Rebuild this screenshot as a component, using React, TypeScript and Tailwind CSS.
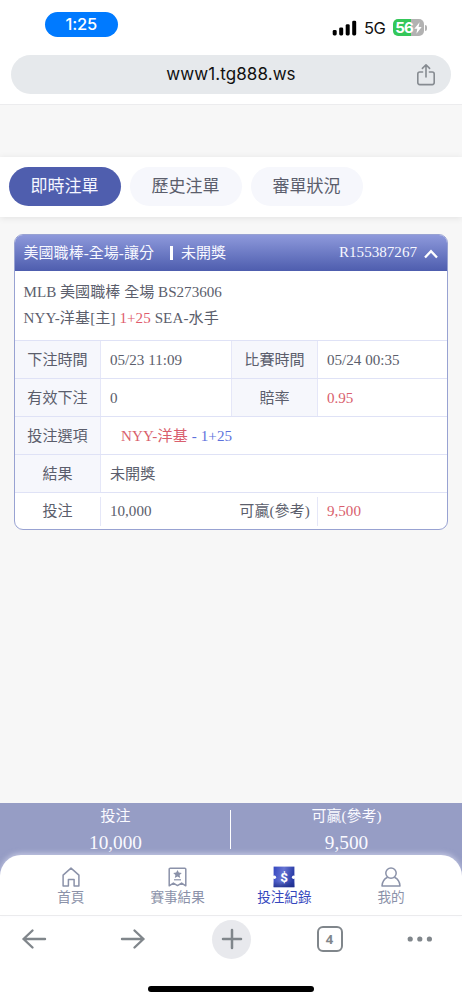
import type { ReactNode } from "react";

const tabs = ["即時注單", "歷史注單", "審單狀況"];

function StatusBar() {
  return (
    <div className="flex h-[55px] items-start justify-between pl-[44.5px] pr-[35px] font-['Inter','Liberation_Sans',sans-serif]">
      <div className="mt-[11.5px] flex h-[25px] w-[73.5px] items-center justify-center rounded-full bg-[#007aff] text-[16.5px] font-medium leading-none tracking-[-0.2px] text-white">
        1:25
      </div>
      <div className="mt-[18px] flex h-[20px] items-center">
        <svg width="25" height="16" viewBox="0 0 25 16" className="-mt-[1px] mr-[7px]">
          <rect x="0.7" y="10" width="4" height="5.4" rx="1.4" />
          <rect x="7.2" y="7.4" width="4" height="8" rx="1.4" />
          <rect x="13.7" y="4.2" width="4" height="11.2" rx="1.4" />
          <rect x="20.2" y="0.7" width="4" height="14.7" rx="1.4" />
        </svg>
        <span className="w-[29px] text-[16.5px] leading-none tracking-[-0.5px] text-[#111]">5G</span>
        <div className="-mt-[1px] flex h-[17px] w-[31px] items-center justify-center rounded-[5px] bg-[linear-gradient(90deg,#34c759_57%,#b2b2b2_57%)] text-white">
          <span className="text-[15px] font-bold leading-none tracking-[-0.8px]">56</span>
          <svg width="8" height="12" viewBox="0 0 8 12" fill="currentColor" className="ml-px">
            <path d="M5.6.2.3 6.8h3L2.4 11.8 7.7 4.9H4.6Z" />
          </svg>
        </div>
        <span className="-mt-[1px] ml-px h-[6px] w-[2px] rounded-r-full bg-[#b2b2b2]" />
      </div>
    </div>
  );
}

function AddressBar() {
  return (
    <div className="mx-[11px] flex h-[39px] items-center rounded-full bg-[#e6e9ec] font-['Inter','Liberation_Sans',sans-serif]">
      <span className="w-[25px]" />
      <span className="flex-1 pl-[10px] text-center text-[17px] leading-none tracking-[0.08px] text-[#111]">
        www1.tg888.ws
      </span>
      <svg
        width="20"
        height="24"
        viewBox="0 0 20 24"
        fill="none"
        stroke="#868b91"
        strokeWidth="1.6"
        strokeLinecap="round"
        strokeLinejoin="round"
        className="mr-[15px]"
      >
        <path d="M6.6 9H3.8a2 2 0 0 0-2 2v8.6a2 2 0 0 0 2 2h12.4a2 2 0 0 0 2-2V11a2 2 0 0 0-2-2h-2.8M10 14V2M6.4 5.4 10 1.8l3.6 3.6" />
      </svg>
    </div>
  );
}

function Label({ children }: { children: ReactNode }) {
  return (
    <div className="flex w-[86px] shrink-0 items-center justify-center border-r-[1.5px] border-[#e5e7f8] bg-[#f6f7fc] pt-[2px]">
      {children}
    </div>
  );
}

function Value({ children }: { children: ReactNode }) {
  return <div className="flex items-center whitespace-pre pl-[9px] pt-[2px]">{children}</div>;
}

function Row({ children }: { children: ReactNode }) {
  return <div className="flex h-[38px] border-t border-[#dfe2f6]">{children}</div>;
}

function BetCard() {
  return (
    <section className="mx-[14px] mt-[17px] h-[296px] shrink-0 overflow-hidden rounded-[9px] border border-[#98a2d2] bg-white text-[15.1px] leading-none text-[#5b5e6c]">
      <header className="flex h-[36px] items-center bg-linear-to-b from-[#8e99db] to-[#4e5dae] pl-[8.5px] pr-[9px] text-[#f7f8ff]">
        <span className="text-[15px] tracking-[0.05px]">美國職棒-全場-讓分</span>
        <span className="ml-[16px] mr-[8px] h-[14px] w-[3px] bg-white" />
        <span className="text-[15px]">未開獎</span>
        <span className="ml-auto">R155387267</span>
        <svg width="14" height="10" viewBox="0 0 14 10" fill="none" stroke="white" strokeWidth="2.3" className="ml-[7px] mt-[1px]">
          <path d="m1 8.5 6-6.3 6 6.3" />
        </svg>
      </header>
      <div className="h-[69px] pl-[8.5px] pt-[8px] leading-[26px]">
        <p>MLB 美國職棒 全場 BS273606</p>
        <p className="tracking-[0.07px]">
          NYY-洋基[主] <span className="text-[#e05b6c]">1+25</span> SEA-水手
        </p>
      </div>
      <Row>
        <Label>下注時間</Label>
        <div className="flex w-[131px] border-r border-[#e5e7f8]">
          <Value>05/23 11:09</Value>
        </div>
        <Label>比賽時間</Label>
        <Value>05/24 00:35</Value>
      </Row>
      <Row>
        <Label>有效下注</Label>
        <div className="flex w-[131px] border-r border-[#e5e7f8]">
          <Value>0</Value>
        </div>
        <Label>賠率</Label>
        <Value>
          <span className="text-[#d95f6e]">0.95</span>
        </Value>
      </Row>
      <Row>
        <Label>投注選項</Label>
        <div className="flex items-center whitespace-pre pl-[20px] pt-[2px] tracking-[0.1px] text-[#5e72dc]">
          <span className="text-[#d95f6e]">NYY-洋基</span> - 1+25
        </div>
      </Row>
      <Row>
        <Label>結果</Label>
        <Value>未開獎</Value>
      </Row>
      <div className="flex h-[37px] items-center border-t border-[#dfe2f6]">
        <div className="flex h-[29px] w-[86px] items-center justify-center border-r-[1.5px] border-[#e5e7f8] pt-px">
          投注
        </div>
        <div className="w-[131px] pl-[9px] pt-px">10,000</div>
        <div className="flex h-[29px] w-[86px] items-center justify-center whitespace-nowrap border-r-[1.5px] border-[#e5e7f8] pt-px">
          可贏(參考)
        </div>
        <div className="pl-[9px] pt-px text-[#d95f6e]">9,500</div>
      </div>
    </section>
  );
}

function Summary() {
  return (
    <div className="flex h-[80px] items-start bg-[#969dc5] text-[#fafaff]">
      <div className="flex w-[231px] flex-col items-center pt-[4px]">
        <span className="text-[15px] leading-[18px]">投注</span>
        <span className="mt-[5px] text-[19.3px] leading-[26px]">10,000</span>
      </div>
      <span className="-ml-px mt-[7px] h-[39px] w-px bg-white" />
      <div className="flex flex-1 flex-col items-center pt-[4px]">
        <span className="text-[15px] leading-[18px]">可贏(參考)</span>
        <span className="mt-[5px] text-[19.3px] leading-[26px]">9,500</span>
      </div>
    </div>
  );
}

function HomeIcon() {
  return (
    <svg width="18" height="20" viewBox="0 0 18 20" fill="none" stroke="currentColor" strokeWidth="1.5" strokeLinejoin="round">
      <path d="M1.1 8.1 9 1.1l7.9 7v10.8h-4.8v-6.3H6.4v6.3H1.1Z" />
    </svg>
  );
}

function ResultIcon() {
  return (
    <svg width="19" height="20" viewBox="0 0 19 20" fill="none" stroke="currentColor" strokeWidth="1.5" strokeLinejoin="round">
      <path d="M2.2 1.2h14.6a1 1 0 0 1 1 1v16.6l-4.2-2.7-4.1 2.5-4.1-2.5-4.2 2.7V2.2a1 1 0 0 1 1-1Z" />
      <path
        d="m9.5 2.9 1.3 2.7 3 .4-2.2 2.1.6 3-2.7-1.5-2.7 1.5.6-3L5.2 6l3-.4Z"
        fill="currentColor"
        stroke="none"
      />
      <path d="M6 12.8h7" strokeWidth="1.2" />
    </svg>
  );
}

function TicketIcon() {
  return (
    <svg width="22" height="22" viewBox="0 0 22 22">
      <defs>
        <linearGradient id="ticket" x1="0" y1="0" x2="1" y2="0.2">
          <stop offset="0" stopColor="#3446c0" />
          <stop offset="0.5" stopColor="#6674d2" />
          <stop offset="1" stopColor="#2a3ca6" />
        </linearGradient>
        <linearGradient id="ticketShade" x1="0" y1="0" x2="0" y2="1">
          <stop offset="0.7" stopColor="#1d2c85" stopOpacity="0" />
          <stop offset="1" stopColor="#1d2c85" stopOpacity="0.8" />
        </linearGradient>
      </defs>
      <path d="M.6.6h20.8v20.6H.6Z" fill="url(#ticket)" />
      <path d="M.6.6h20.8v20.6H.6Z" fill="url(#ticketShade)" />
      <circle cx="1.4" cy="11.2" r="1.7" fill="white" />
      <circle cx="20.6" cy="11.2" r="1.7" fill="white" />
      <text x="11" y="15.8" textAnchor="middle" fontSize="13.5" fontWeight="700" fill="white" fontFamily="Roboto, sans-serif">
        $
      </text>
    </svg>
  );
}

function UserIcon() {
  return (
    <svg width="20" height="20" viewBox="0 0 20 20" fill="none" stroke="currentColor" strokeWidth="1.5" strokeLinejoin="round">
      <circle cx="10" cy="6.1" r="5.2" />
      <path d="M6.6 10.2C3.4 11.7 1.2 14.6 1 19h18c-.2-4.4-2.4-7.3-5.6-8.8" />
    </svg>
  );
}

const navItems = [
  { label: "首頁", icon: <HomeIcon /> },
  { label: "賽事結果", icon: <ResultIcon /> },
  { label: "投注紀錄", icon: <TicketIcon />, active: true },
  { label: "我的", icon: <UserIcon /> }
];

function BottomNav() {
  return (
    <nav className="relative -mt-[28px] flex h-[61px] rounded-t-[21px] border-b border-[#ebebed] bg-white pl-[17.5px] pr-[17.5px] shadow-[0_-2px_5px_rgba(225,228,245,0.55)]">
      {navItems.map((item) => (
        <div
          key={item.label}
          className={[
            "flex flex-1 flex-col items-center pt-[10px]",
            item.active ? "text-[#3547bd]" : "text-[#8b92a9]"
          ].join(" ")}
        >
          <span className="flex h-[23px] items-center">{item.icon}</span>
          <span className="text-[13.6px] leading-[20px]">{item.label}</span>
        </div>
      ))}
    </nav>
  );
}

function BrowserToolbar() {
  return (
    <div className="flex h-[84px] flex-col items-center bg-white text-[#80868b]">
      <div className="flex h-[46px] w-full items-center justify-between pl-[21px] pr-[29px]">
        <svg width="26" height="22" viewBox="0 0 26 22" fill="none" stroke="currentColor" strokeWidth="2.4" strokeLinecap="round" strokeLinejoin="round">
          <path d="M24 11H2.5M11.5 2.5 2.5 11l9 8.5" />
        </svg>
        <svg width="26" height="22" viewBox="0 0 26 22" fill="none" stroke="currentColor" strokeWidth="2.4" strokeLinecap="round" strokeLinejoin="round" className="ml-[12.5px]">
          <path d="M2 11h21.5M14.5 2.5l9 8.5-9 8.5" />
        </svg>
        <div className="ml-[5.5px] flex size-[39px] items-center justify-center rounded-full bg-[#e8e9ed]">
          <svg width="22" height="22" viewBox="0 0 22 22" fill="none" stroke="currentColor" strokeWidth="2.5" strokeLinecap="round">
            <path d="M11 2v18M2 11h18" />
          </svg>
        </div>
        <div className="ml-[5px] flex size-[26px] items-center justify-center rounded-[6px] border-2 border-[#80868b] font-['Open_Sans',sans-serif] text-[13px] font-bold leading-none">
          4
        </div>
        <svg width="26" height="6" viewBox="0 0 26 6" fill="currentColor" className="ml-[4px]">
          <circle cx="3.2" cy="3" r="2.6" />
          <circle cx="12.8" cy="3" r="2.6" />
          <circle cx="22.4" cy="3" r="2.6" />
        </svg>
      </div>
      <div className="mt-[24px] h-[5.5px] w-[166px] rounded-full bg-black" />
    </div>
  );
}

export default function App() {
  return (
    <div className="flex h-[1000px] w-[462px] flex-col overflow-hidden bg-[#f7f7f7] font-['Liberation_Serif','Noto_Sans_CJK_TC',serif] font-normal">
      <div className="h-[105px] shrink-0 border-b border-[#ececee] bg-white">
        <StatusBar />
        <AddressBar />
      </div>
      <div className="mt-[51.5px] flex h-[60.5px] shrink-0 items-center gap-[9px] bg-white pl-[8.5px] shadow-[0_1px_7px_rgba(0,0,0,0.09)]">
        {tabs.map((tab, i) => (
          <button
            key={tab}
            type="button"
            className={[
              "h-[39px] w-[112px] rounded-full text-[17px] leading-none",
              i === 0 ? "bg-[#4f5eae] text-[#f5f6ff]" : "bg-[#f6f7fc] text-[#5b5e6c]"
            ].join(" ")}
          >
            {tab}
          </button>
        ))}
      </div>
      <BetCard />
      <div className="mt-auto shrink-0">
        <Summary />
        <BottomNav />
        <BrowserToolbar />
      </div>
    </div>
  );
}
